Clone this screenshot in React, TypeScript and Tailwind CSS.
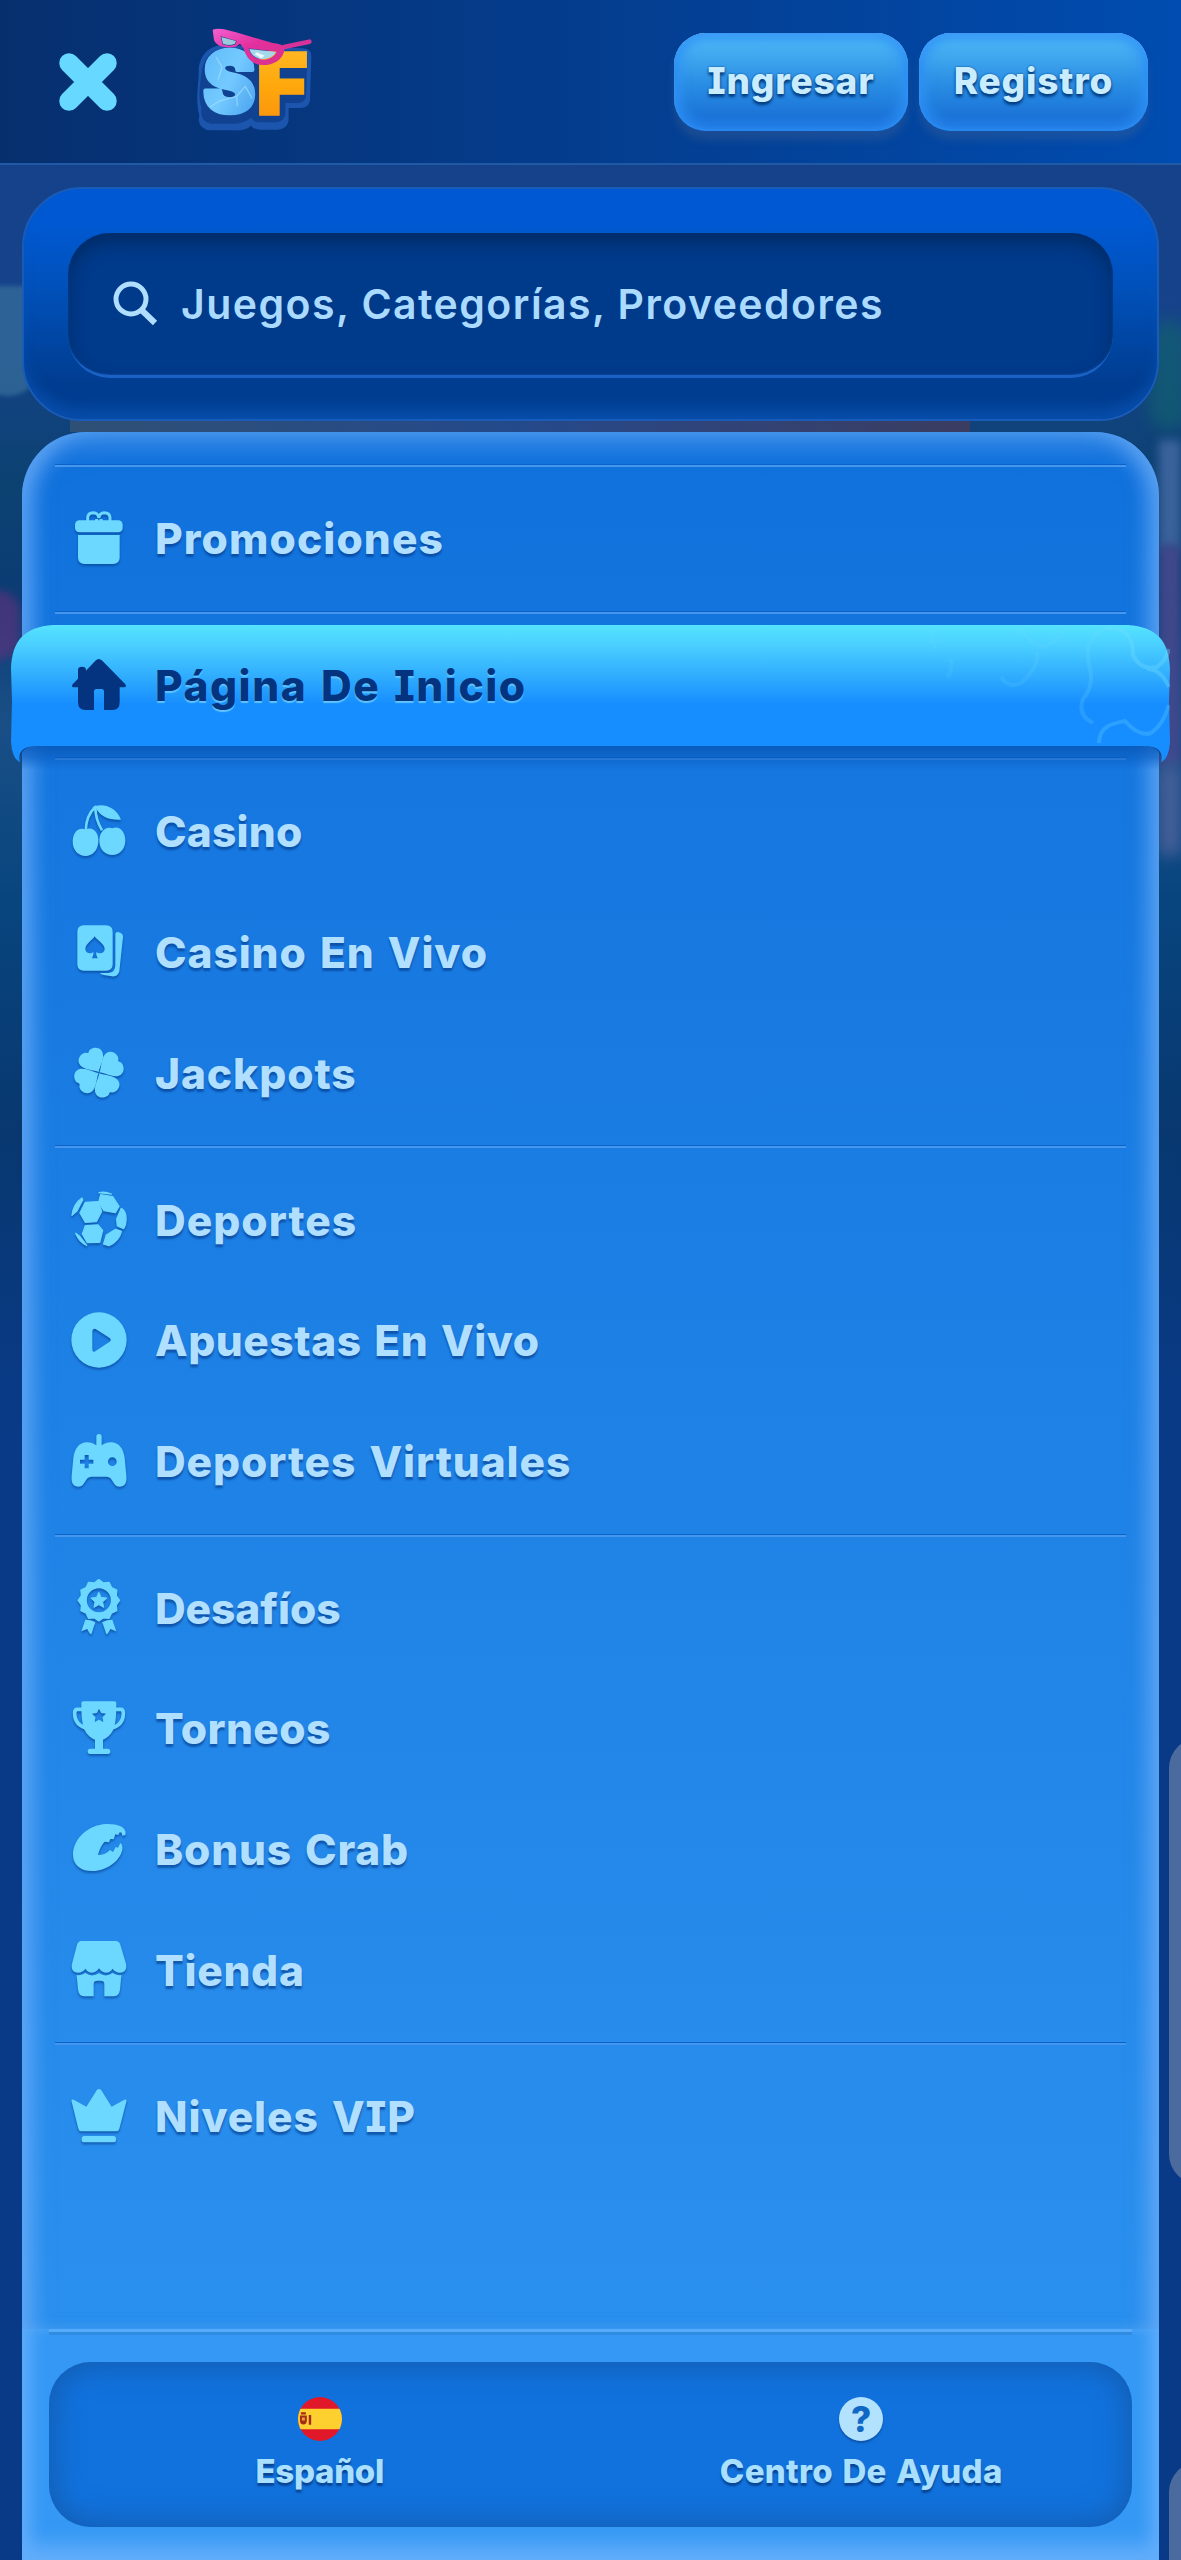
import React from 'react';

type MenuItem = {
	label: string;
	tracking: string;
	icon: React.ReactNode;
	active?: boolean;
};

// n-pointed star as a polygon points string
const star = (cx: number, cy: number, outer: number, inner: number, n = 5) =>
	Array.from({ length: n * 2 }, (_, i) => {
		const r = i % 2 ? inner : outer;
		const a = (Math.PI * i) / n - Math.PI / 2;
		return `${(cx + r * Math.cos(a)).toFixed(1)} ${(cy + r * Math.sin(a)).toFixed(1)}`;
	}).join('L');

const Gift = () => (
	<>
		<rect x="15" y="31" width="143" height="36" rx="13" />
		<path d="M24 75H149V142Q149 162 129 162H44Q24 162 24 142Z" />
		<path
			d="M53 33V23Q54 8 70 8Q85 9 86.500 24Q88 9 103 8Q119 8 120 23V33M80 33V27M93 33V27"
			fill="none"
			stroke="currentColor"
			strokeWidth="9"
		/>
	</>
);

const Home = () => (
	<path d="M76 11Q86 1 97 11L166 82Q171 90 163 91H149V135Q149 159 128 159H102V104Q102 96 95 96H79Q72 96 72 104V159H46Q24 159 24 135V91H10Q3 90 8 82L24 65V38Q24 29 36 29Q48 29 48 39V41Z" />
);

const Cherry = () => (
	<>
		<path d="M47 80C70 68 88 92 85 118C83 144 66 159 47 159C26 159 8 142 8 116C8 88 26 70 47 80Z" />
		<path d="M127 76C148 66 166 86 166 112C166 140 148 156 127 156C106 156 88 140 88 114C88 88 106 68 127 76Z" />
		<path
			d="M47 84C48 50 58 28 76 12C76 36 84 62 96 82"
			fill="none"
			stroke="currentColor"
			strokeWidth="8"
			strokeLinejoin="round"
		/>
		<path d="M66 14C90 -2 138 8 153 50C120 52 88 42 77 12Z" />
	</>
);

const Cards = () => (
	<>
		<path
			fillRule="evenodd"
			d="M42 4H108Q128 4 128 24V120Q128 140 108 140H42Q22 140 22 120V24Q22 4 42 4ZM74 37C68 48 46 60 46 75C46 88 62 92 70 84C71 94 68 98 66 103H83C81 98 78 94 79 84C88 92 104 88 104 75C104 60 80 48 74 37Z"
		/>
		<path d="M136 30Q138 22 147 25Q160 29 159 40L148 142Q144 160 125 157L102 153Q92 151 90 147H116Q136 145 136 124Z" />
	</>
);

const leaf =
	'M0 -2C-8 -14 -40 -30 -39 -52C-38 -72 -11 -79 -3 -69Q0 -66 3 -69C11 -79 38 -72 39 -52C40 -30 8 -14 0 -2Z';

const Clover = () => (
	<g transform="translate(87 83)">
		<path d={leaf} transform="rotate(-29)" />
		<path d={leaf} transform="rotate(59)" />
		<path d={leaf} transform="rotate(151)" />
		<path d={leaf} transform="rotate(240)" />
	</g>
);

const Ball = () => (
	<g stroke="currentColor" strokeWidth="4" strokeLinejoin="round">
		<path d="M46 34L84 32L95 61L79 92L46 94L30 66Z" />
		<path d="M92 11L128 17L147 46L136 65L102 59L86 34Z" />
		<path d="M87 5Q105 1 124 9L104 7Z" />
		<path d="M6 73Q10 38 36 21L38 27L20 61Z" />
		<path d="M154 52Q170 62 168 88Q168 104 161 113L142 105L140 84Z" />
		<path d="M46 104L84 102L98 118L89 154L52 155L37 129Z" />
		<path d="M137 115L154 121Q148 150 117 164L101 159L109 132Z" />
		<path d="M17 127L28 135L50 163Q28 154 17 127Z" />
	</g>
);

const Play = () => (
	<path
		fillRule="evenodd"
		d="M87 1A83 83 0 1 1 87 167A83 83 0 1 1 87 1ZM67 58V112Q67 124 77 117L119 89Q126 84 119 78L77 51Q68 47 67 58Z"
	/>
);

const Gamepad = () => (
	<path
		fillRule="evenodd"
		d="M79 11Q79 3 87 3Q95 3 95 11V37C106 31 112 27 126 28C148 30 160 48 164 74L169 128C171 150 164 161 148 161C128 161 130 131 110 131H64C44 131 46 161 26 161C10 161 3 150 5 128L10 74C14 48 26 30 48 28C62 27 68 31 79 37ZM44 66V80H30V92H44V106H56V92H70V80H56V66ZM127 73A13 13 0 1 0 127 99A13 13 0 1 0 127 73Z"
	/>
);

const Medal = () => (
	<>
		<path
			d={`M${star(86.500, 64, 62, 54, 12)}ZM86.500 26A38 38 0 1 0 86.500 102A38 38 0 1 0 86.500 26Z`}
			fillRule="evenodd"
			stroke="currentColor"
			strokeWidth="4"
			strokeLinejoin="round"
		/>
		<path d={`M${star(86.500, 65, 25, 12)}Z`} stroke="currentColor" strokeWidth="3" strokeLinejoin="round" />
		<path d="M46 122L62 124L76 130L64 166Q59 166 52 150L34 157Z" />
		<path d="M127 122L111 124L97 130L109 166Q114 166 121 150L139 157Z" />
	</>
);

const Trophy = () => (
	<>
		<path
			fillRule="evenodd"
			d={`M34 9Q34 4 40 4H133Q139 4 139 9C139 74 134 104 99 119V146H114Q121 147 121 154Q121 162 114 162H60Q53 162 53 154Q53 147 60 146H75V119C40 104 34 74 34 9ZM${star(87, 48, 22, 11)}Z`}
		/>
		<path
			d="M38 28H22Q14 28 14 40Q14 78 56 86M136 28H152Q160 28 160 40Q160 78 118 86"
			fill="none"
			stroke="currentColor"
			strokeWidth="11"
		/>
	</>
);

const Crab = () => (
	<path d="M157 44L166 42C172 20 146 8 108 9C54 12 8 54 9 104C11 136 38 151 68 150C110 149 150 120 157 86Q159 70 151 66L144 80L137 78L129 93L120 87Q107 102 84 102Q90 76 104 62L117 64L121 54L131 55L136 40L145 42L149 34L155 35Z" />
);

const Store = () => (
	<>
		<path d="M34 0H138Q147 0 151 11L168 68Q173 93 150 95Q135 94 128 83Q120 95 108 95Q94 94 87 82Q80 94 66 95Q54 95 46 83Q39 94 24 95Q1 93 6 68L21 11Q25 0 34 0Z" />
		<path d="M20 102Q36 104 46 96Q66 110 87 97Q108 110 128 96Q138 104 154 102L150 146Q147 166 130 166H103V129Q103 119 92 119H82Q71 119 71 129V166H44Q27 166 24 146Z" />
	</>
);

const Crown = () => (
	<>
		<path d="M80 7Q87 -1 94 7L125 56L163 35Q171 33 169 41L148 122Q146 130 138 130H35Q27 130 25 122L5 41Q3 33 11 35L49 56Z" />
		<rect x="35" y="144" width="103" height="19" rx="8" />
	</>
);

const groups: MenuItem[][] = [
	[{ label: 'Promociones', tracking: 'tracking-[1.1px]', icon: <Gift /> }],
	[{ label: 'Página De Inicio', tracking: 'tracking-[1.5px]', icon: <Home />, active: true }],
	[
		{ label: 'Casino', tracking: 'tracking-[0.2px]', icon: <Cherry /> },
		{ label: 'Casino En Vivo', tracking: 'tracking-[0.9px]', icon: <Cards /> },
		{ label: 'Jackpots', tracking: 'tracking-[0.9px]', icon: <Clover /> },
	],
	[
		{ label: 'Deportes', tracking: 'tracking-[1px]', icon: <Ball /> },
		{ label: 'Apuestas En Vivo', tracking: 'tracking-[0.5px]', icon: <Play /> },
		{ label: 'Deportes Virtuales', tracking: 'tracking-[0.9px]', icon: <Gamepad /> },
	],
	[
		{ label: 'Desafíos', tracking: 'tracking-[-0.1px]', icon: <Medal /> },
		{ label: 'Torneos', tracking: 'tracking-[0.4px]', icon: <Trophy /> },
		{ label: 'Bonus Crab', tracking: 'tracking-[0.8px]', icon: <Crab /> },
		{ label: 'Tienda', tracking: 'tracking-[0.7px]', icon: <Store /> },
	],
	[{ label: 'Niveles VIP', tracking: 'tracking-[0.9px]', icon: <Crown /> }],
];

const Ribbon = () => (
	<svg
		className="absolute -top-px -left-[11px] h-[145px] w-[1159px] max-w-none"
		viewBox="0 0 1159 145"
	>
		<defs>
			<linearGradient id="ribbon" x1="0" y1="0" x2="0" y2="121" gradientUnits="userSpaceOnUse">
				<stop offset="0" stopColor="#55e3ff" />
				<stop offset="0.18" stopColor="#49cdff" />
				<stop offset="0.42" stopColor="#30adfe" />
				<stop offset="0.65" stopColor="#178eff" />
				<stop offset="1" stopColor="#178eff" />
			</linearGradient>
			<linearGradient id="fall" x1="0" y1="0" x2="0" y2="1">
				<stop offset="0" stopColor="#0756b3" stopOpacity="0.85" />
				<stop offset="0.5" stopColor="#0a5cc0" stopOpacity="0.6" />
				<stop offset="1" stopColor="#0a5cc0" stopOpacity="0" />
			</linearGradient>
		</defs>
		<rect x="11" y="120" width="1137" height="25" fill="url(#fall)" />
		<path d="M11 121H24Q9 122 8 136L4 128Z" fill="#083c88" />
		<path d="M1148 121H1135Q1150 122 1151 136L1155 128Z" fill="#083c88" />
		<path
			d="M42 0H1117C1146 2 1158 16 1159 44L1158 76L1159 116Q1158 134 1150 137Q1154 121 1132 121H27Q5 121 9 137Q1 134 0 116L1 76L0 44C1 16 13 2 42 0Z"
			fill="url(#ribbon)"
		/>
		<g fill="none" stroke="#6fdcff" strokeOpacity="0.2" strokeWidth="4">
			<path d="M916 2C922 10 921 18 925 24M940 34Q942 46 936 52" strokeOpacity="0.12" />
			<path d="M1009 3C1018 14 1022 20 1030 22Q1044 20 1052 6M1026 26C1028 36 1022 48 1010 58Q998 64 990 52" strokeOpacity="0.14" />
			<path d="M1096 3C1080 8 1074 22 1078 40Q1084 60 1072 74Q1066 90 1082 98" />
			<path d="M1096 3C1118 2 1122 16 1122 30Q1130 46 1146 42Q1156 34 1158 24M1136 44Q1150 44 1158 62" strokeOpacity="0.35" />
			<path d="M1088 118C1088 100 1104 98 1114 96Q1128 112 1140 108Q1152 100 1158 80" strokeOpacity="0.25" />
		</g>
	</svg>
);

const Divider = ({ top = false }: { top?: boolean }) => (
	<div className={top ? 'px-[33px] pb-3' : 'px-[33px] py-3'}>
		<div className="h-[2px] bg-[#4496ee] shadow-[0_-1px_0_#0b62c8]" />
	</div>
);

const Row = ({ label, tracking, icon, active }: MenuItem) => (
	<li className="relative h-[120.7px]">
		{active && <Ribbon />}
		<div
			className={`relative flex h-full items-center pl-12 ${active ? 'text-[#04347f]' : 'text-[#6dd8ff]'}`}
		>
			<svg
				className={`mb-[3px] size-14 shrink-0 overflow-visible ${active ? '' : 'drop-shadow-[0_2px_1px_rgba(5,60,140,0.6)]'}`}
				viewBox="0 0 168 168"
				fill="currentColor"
			>
				{icon}
			</svg>
			<span
				className={`ml-[29px] whitespace-nowrap text-[42.5px] leading-none font-extrabold [word-spacing:3px] ${tracking} ${active ? '[text-shadow:0_2px_1px_#5fc4ff]' : 'text-[#b1dfff] [text-shadow:0_3px_2px_rgba(5,60,140,0.65)]'}`}
			>
				{label}
			</span>
		</div>
	</li>
);

const Logo = () => (
	<svg className="mb-1 ml-[79px] h-[106px] w-[118px] overflow-visible" viewBox="0 0 354 318">
		<defs>
			<linearGradient id="ice" x1="0" y1="0" x2="1" y2="1">
				<stop offset="0" stopColor="#5cb8f8" />
				<stop offset="0.5" stopColor="#74caff" />
				<stop offset="1" stopColor="#3f98ec" />
			</linearGradient>
			<linearGradient id="gold" x1="0" y1="0" x2="0" y2="1">
				<stop offset="0" stopColor="#ffbe2e" />
				<stop offset="0.5" stopColor="#ffa90d" />
				<stop offset="1" stopColor="#f98d0c" />
			</linearGradient>
			<linearGradient id="frame" x1="0" y1="0" x2="1" y2="1">
				<stop offset="0" stopColor="#f35fd0" />
				<stop offset="0.5" stopColor="#e22f9d" />
				<stop offset="1" stopColor="#d8338a" />
			</linearGradient>
		</defs>
		<path
			d="M10 265C-4 215 10 165 8 125C14 75 50 50 95 55L320 64Q348 66 346 90L342 220Q338 244 312 243H278V280Q274 306 246 308H190Q170 306 165 296Q150 312 110 310H45Q10 308 8 278Z"
			fill="#1b55ad"
		/>
		<path
			d="M16 240C4 205 14 165 18 125C30 80 60 62 95 64L318 72Q336 74 334 92L330 208Q328 226 308 228H268V262Q264 284 240 286H190Q172 286 166 272Q140 292 100 290H45Q20 286 16 262Z"
			fill="#104291"
		/>
		<g fontWeight="900" style={{ fontFamily: 'Inter, sans-serif' }}>
			<text x="22" y="256" fontSize="250" textLength="156" lengthAdjust="spacingAndGlyphs" fill="url(#ice)" stroke="url(#ice)" strokeWidth="14" strokeLinejoin="round">
				S
			</text>
			<text x="182" y="262" fontSize="250" textLength="152" lengthAdjust="spacingAndGlyphs" fill="url(#gold)" stroke="url(#gold)" strokeWidth="10">
				F
			</text>
		</g>
		<g fill="none" stroke="#b7ebff" strokeWidth="4" opacity="0.5">
			<path d="M60 90L78 120L66 158M168 214L148 178L122 208L124 238M122 208L70 222L42 240" />
		</g>
		<path d="M264 60L340 44" stroke="#d6339a" strokeWidth="14" strokeLinecap="round" />
		<path
			fillRule="evenodd"
			d="M50 8C70 2 90 8 120 16L230 48Q268 52 266 66Q260 106 212 114Q156 118 142 62L132 50L118 60Q64 66 54 40ZM74 28L80 52Q100 60 118 52L122 42ZM158 64Q166 98 206 98Q232 94 242 74Z"
			fill="url(#frame)"
		/>
		<path d="M76 30L81 50Q100 58 117 50L120 42Z" fill="#9cc9dc" />
		<path d="M160 66Q168 96 206 96Q230 92 240 75Z" fill="#a5d8ea" />
		<path d="M182 76L206 86L196 94L176 82Z" fill="#fff" opacity="0.8" />
	</svg>
);

const pillClass =
	"flex h-[98px] items-center justify-center rounded-[32px] bg-linear-to-b from-[#4ab4f4] from-10% via-[#2b8fe4] via-50% to-[#1567d2] pb-[3px] text-[37px] leading-none font-extrabold tracking-[0.8px] text-[#c9edff] [font-feature-settings:'cv08'] [text-shadow:0_3px_3px_#033c80,0_0_2px_#033c80] shadow-[inset_0_0_12px_6px_#2f93f6,inset_0_3px_3px_#74c3ff,inset_0_-5px_5px_#0955c8,0_9px_8px_rgba(70,100,150,0.35)]";

export default function App() {
	return (
		<div className="relative flex h-[2560px] w-[1181px] flex-col overflow-hidden bg-[linear-gradient(180deg,#13418a_0px,#16438a_330px,#0c4272_480px,#0b3c74_600px,#1a4f86_720px,#08457f_900px,#08386f_1130px,#093a86_1400px,#093a88_2560px)] font-bold [font-family:Inter,'Noto_Sans',sans-serif]">
			{/* blurred scene behind the drawer */}
			<div className="absolute -left-6 top-[286px] h-[110px] w-16 rounded-b-full bg-[#3d78a0] opacity-60 blur-[2px]" />
			<div className="absolute -left-6 top-[590px] h-[70px] w-[44px] rounded-full bg-[#65307f] opacity-60 blur-[4px]" />
			<div className="absolute -right-2 top-[320px] h-[110px] w-10 rounded-full bg-[#126070] opacity-70 blur-[8px]" />
			<div className="absolute right-0 top-[440px] h-[110px] w-[22px] bg-[#3b629b] blur-[5px]" />
			<div className="absolute right-0 top-[545px] h-[220px] w-[22px] bg-[#40488c] blur-[5px]" />
			<div className="absolute right-0 top-[765px] h-[90px] w-[22px] bg-[#48609a] blur-[8px]" />
			<div className="absolute -right-12 top-[1738px] h-[446px] w-[60px] rounded-[40px] bg-[#4b6b9f]" />
			<div className="absolute -right-12 top-[2462px] h-[160px] w-[60px] rounded-[40px] bg-[#4b6b9f]" />
			<div className="absolute left-[70px] top-[420px] h-3 w-[900px] bg-linear-to-r from-[#2f5075] via-[#24498b] to-[#3a3c60]" />

			<header className="relative flex h-[165px] shrink-0 items-center border-b-2 border-[#205aa4] bg-linear-to-r from-[#062f6e] to-[#004cb0] pr-[33px] pl-[59px]">
				<button type="button" aria-label="Cerrar">
					<svg className="size-[58px]" viewBox="0 0 58 58">
						<path d="M10 10L48 48M48 10L10 48" stroke="#67d8ff" strokeWidth="19.500" strokeLinecap="round" />
					</svg>
				</button>
				<Logo />
				<div className="ml-auto flex gap-[11px]">
					<button type="button" className={`${pillClass} w-[234px]`}>
						Ingresar
					</button>
					<button type="button" className={`${pillClass} w-[229px]`}>
						Registro
					</button>
				</div>
			</header>

			<div className="relative mx-[22px] mt-[22px] h-[234px] shrink-0 rounded-[60px] border-2 border-[#185bb8] bg-linear-to-b from-[#0059d2] from-15% via-[#0050b8] via-45% to-[#003d90] to-85% p-11 shadow-[inset_0_-14px_14px_-4px_rgba(12,88,190,0.6)]">
				<label className="flex h-[145px] items-center rounded-[42px] border-b-[3px] border-[#1a62c6] bg-[#003a8a] pl-[45px] shadow-[inset_0_10px_16px_#002c68,inset_0_0_3px_#1a56b0]">
					<svg className="size-[46px]" viewBox="0 0 46 46" fill="none" stroke="#b0deff" strokeWidth="5">
						<circle cx="18" cy="18" r="15" />
						<path d="M28.500 29L42 42" strokeWidth="6" />
					</svg>
					<span className="ml-[22px] text-[41px] leading-none font-semibold tracking-[1.45px] whitespace-nowrap text-[#aadbff]">
						Juegos, Categorías, Proveedores
					</span>
				</label>
			</div>

			<div className="relative mx-[22px] mt-[11px] flex grow flex-col">
				<nav className="h-[1897px] rounded-t-[64px] bg-linear-to-b from-[#1071dc] to-[#2a90ee] pt-[33px] shadow-[inset_0_12px_24px_rgba(120,180,250,0.5),inset_22px_0_20px_-10px_rgba(110,175,250,0.6),inset_-22px_0_20px_-10px_rgba(110,175,250,0.6)] [font-feature-settings:'cv08']">
					{groups.map((items, i) => (
						<React.Fragment key={items[0].label}>
							<Divider top={i === 0} />
							<ul>
								{items.map((item) => (
									<Row key={item.label} {...item} />
								))}
							</ul>
						</React.Fragment>
					))}
				</nav>
				<footer className="grow bg-[#3498f4] px-[27px] shadow-[inset_0_-24px_20px_-8px_#62adfb,inset_16px_0_16px_-6px_#5cabfa,inset_-16px_0_16px_-6px_#5cabfa]">
					<div className="h-[6px] border-t-[3px] border-b-[3px] border-t-[#56abfb] border-b-[#2f8ce0]" />
					<div className="mt-[27px] flex h-[165px] rounded-[42px] bg-[#1172dd] text-[33px] leading-none text-[#a9e0ff] shadow-[inset_0_0_30px_4px_rgba(20,90,170,0.9)]">
						<button type="button" className="flex flex-1 flex-col items-center pt-[35px] font-extrabold">
							<svg className="size-[44px]" viewBox="0 0 45 45">
								<clipPath id="disc">
									<circle cx="22.500" cy="22.500" r="22.500" />
								</clipPath>
								<g clipPath="url(#disc)">
									<path d="M0 0H45V45H0Z" fill="#e0182a" />
									<path d="M0 12H45V33H0Z" fill="#fdd02f" />
									<path d="M2 19H9V24Q9 28 5.500 28Q2 28 2 24ZM3 15.500H8V18H3ZM11 18.500H13.500V28.500H11Z" fill="#a52a1c" />
									<path d="M4 21H7V24H4Z" fill="#e9a32c" />
								</g>
							</svg>
							<span className="mt-[14px] tracking-[-0.3px] [text-shadow:0_3px_2px_rgba(5,50,120,0.7)]">Español</span>
						</button>
						<button type="button" className="flex flex-1 flex-col items-center pt-[35px] font-extrabold">
							<span className="flex size-[44px] items-center justify-center rounded-full bg-[#b3e2ff] text-[35px] font-extrabold text-[#1168c4] shadow-[0_2px_2px_rgba(5,50,120,0.5)]">
								?
							</span>
							<span className="mt-[14px] tracking-[0.3px] [word-spacing:2px] [text-shadow:0_3px_2px_rgba(5,50,120,0.7)]">Centro De Ayuda</span>
						</button>
					</div>
				</footer>
			</div>
		</div>
	);
}
